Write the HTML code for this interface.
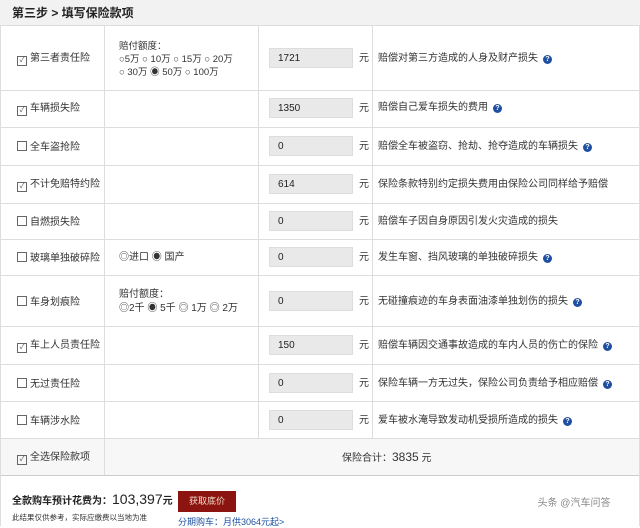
<!DOCTYPE html><html><head><meta charset="utf-8"><style>
body{margin:0;width:640px;height:526px;overflow:hidden;background:#fff;font-family:"Liberation Sans","Noto Sans CJK SC",sans-serif;color:#333;font-size:10px;position:relative}
.a{position:absolute;line-height:12px;white-space:nowrap}
.hl{position:absolute;left:0;width:640px;height:1px;background:#ddd}
.vl{position:absolute;width:1px;background:#ddd}
.in{position:absolute;left:269px;width:84px;height:20px;background:#e9e9e9;border:1px solid #ddd;box-sizing:border-box;font-size:10px;padding:4px 0 0 8px;color:#222;line-height:12px}
.q{display:inline-block;width:9px;height:9px;border-radius:50%;background:#1f4fa0;color:#fff;font-size:7px;line-height:9px;text-align:center;margin-left:5px;vertical-align:0px;font-weight:bold}
.cb{display:inline-block;width:8px;height:8px;border:1px solid #666;font-size:7px;line-height:8px;text-align:center;margin-right:3px;vertical-align:-1px;color:#444}
</style></head><body>
<div class="a" style="left:0;top:0;width:640px;height:25px;background:#f2f2f2"></div>
<div class="a" style="left:12px;top:7px;font-size:12px;font-weight:bold;color:#222">第三步 &gt; 填写保险款项</div>
<div class="a" style="left:0;top:438px;width:640px;height:37px;background:#f7f7f7"></div>
<div class="hl" style="top:25px"></div><div class="hl" style="top:90px"></div><div class="hl" style="top:127px"></div><div class="hl" style="top:165px"></div><div class="hl" style="top:203px"></div><div class="hl" style="top:239px"></div><div class="hl" style="top:275px"></div><div class="hl" style="top:326px"></div><div class="hl" style="top:364px"></div><div class="hl" style="top:401px"></div><div class="hl" style="top:438px"></div><div class="hl" style="top:475px;background:#ccc"></div>
<div class="vl" style="left:104px;top:25px;height:450px"></div>
<div class="vl" style="left:258px;top:25px;height:413px"></div>
<div class="vl" style="left:372px;top:25px;height:413px"></div>
<div class="vl" style="left:639px;top:25px;height:501px"></div>
<div class="vl" style="left:0;top:25px;height:501px"></div>

<div class="a" style="left:17px;top:53px"><span class="cb">✓</span>第三者责任险</div>
<div class="a" style="left:119px;top:40px;line-height:13px;font-size:9.5px">赔付额度：<br>○5万 ○ 10万 ○ 15万 ○ 20万<br>○ 30万 ◉ 50万 ○ 100万</div>
<div class="in" style="top:48px">1721</div><div class="a" style="left:359px;top:53px">元</div>
<div class="a" style="left:378px;top:53px">赔偿对第三方造成的人身及财产损失<span class="q">?</span></div>

<div class="a" style="left:17px;top:103px"><span class="cb">✓</span>车辆损失险</div>
<div class="in" style="top:98px">1350</div><div class="a" style="left:359px;top:103px">元</div>
<div class="a" style="left:378px;top:102px">赔偿自己爱车损失的费用<span class="q">?</span></div>

<div class="a" style="left:17px;top:141px"><span class="cb"></span>全车盗抢险</div>
<div class="in" style="top:136px">0</div><div class="a" style="left:359px;top:141px">元</div>
<div class="a" style="left:378px;top:141px">赔偿全车被盗窃、抢劫、抢夺造成的车辆损失<span class="q">?</span></div>

<div class="a" style="left:17px;top:179px"><span class="cb">✓</span>不计免赔特约险</div>
<div class="in" style="top:174px">614</div><div class="a" style="left:359px;top:179px">元</div>
<div class="a" style="left:378px;top:179px">保险条款特别约定损失费用由保险公司同样给予赔偿</div>

<div class="a" style="left:17px;top:216px"><span class="cb"></span>自燃损失险</div>
<div class="in" style="top:211px">0</div><div class="a" style="left:359px;top:216px">元</div>
<div class="a" style="left:378px;top:216px">赔偿车子因自身原因引发火灾造成的损失</div>

<div class="a" style="left:17px;top:252px"><span class="cb"></span>玻璃单独破碎险</div>
<div class="a" style="left:119px;top:252px">◎进口 ◉ 国产</div>
<div class="in" style="top:247px">0</div><div class="a" style="left:359px;top:252px">元</div>
<div class="a" style="left:378px;top:252px">发生车窗、挡风玻璃的单独破碎损失<span class="q">?</span></div>

<div class="a" style="left:17px;top:296px"><span class="cb"></span>车身划痕险</div>
<div class="a" style="left:119px;top:288px;line-height:14px">赔付额度：<br>◎2千 ◉ 5千 ◎ 1万 ◎ 2万</div>
<div class="in" style="top:291px">0</div><div class="a" style="left:359px;top:296px">元</div>
<div class="a" style="left:378px;top:296px">无碰撞痕迹的车身表面油漆单独划伤的损失<span class="q">?</span></div>

<div class="a" style="left:17px;top:340px"><span class="cb">✓</span>车上人员责任险</div>
<div class="in" style="top:335px">150</div><div class="a" style="left:359px;top:340px">元</div>
<div class="a" style="left:378px;top:340px">赔偿车辆因交通事故造成的车内人员的伤亡的保险<span class="q">?</span></div>

<div class="a" style="left:17px;top:378px"><span class="cb"></span>无过责任险</div>
<div class="in" style="top:373px">0</div><div class="a" style="left:359px;top:378px">元</div>
<div class="a" style="left:378px;top:378px">保险车辆一方无过失，保险公司负责给予相应赔偿<span class="q">?</span></div>

<div class="a" style="left:17px;top:415px"><span class="cb"></span>车辆涉水险</div>
<div class="in" style="top:410px">0</div><div class="a" style="left:359px;top:415px">元</div>
<div class="a" style="left:378px;top:415px">爱车被水淹导致发动机受损所造成的损失<span class="q">?</span></div>

<div class="a" style="left:17px;top:452px"><span class="cb">✓</span>全选保险款项</div>
<div class="a" style="left:342px;top:451px">保险合计：<span style="font-size:12px">3835</span> 元</div>

<div class="a" style="left:12px;top:491px;font-size:10px;font-weight:bold;color:#222;line-height:16px">全款购车预计花费为：<span style="font-size:14px;font-weight:normal">103,397</span>元</div>
<div class="a" style="left:12px;top:512px;font-size:7.5px">此结果仅供参考，实际应缴费以当地为准</div>
<div class="a" style="left:178px;top:491px;width:58px;height:21px;background:#8b1410;color:#f4d9c7;font-size:9px;line-height:21px;text-align:center">获取底价</div>
<div class="a" style="left:178px;top:516px;font-size:9px;color:#1a4f9e">分期购车：月供3064元起&gt;</div>
<div class="a" style="left:520px;top:494px;width:108px;height:20px;color:#555;font-size:10px;line-height:20px;text-align:center;opacity:.7">头条 @汽车问答</div>
</body></html>
